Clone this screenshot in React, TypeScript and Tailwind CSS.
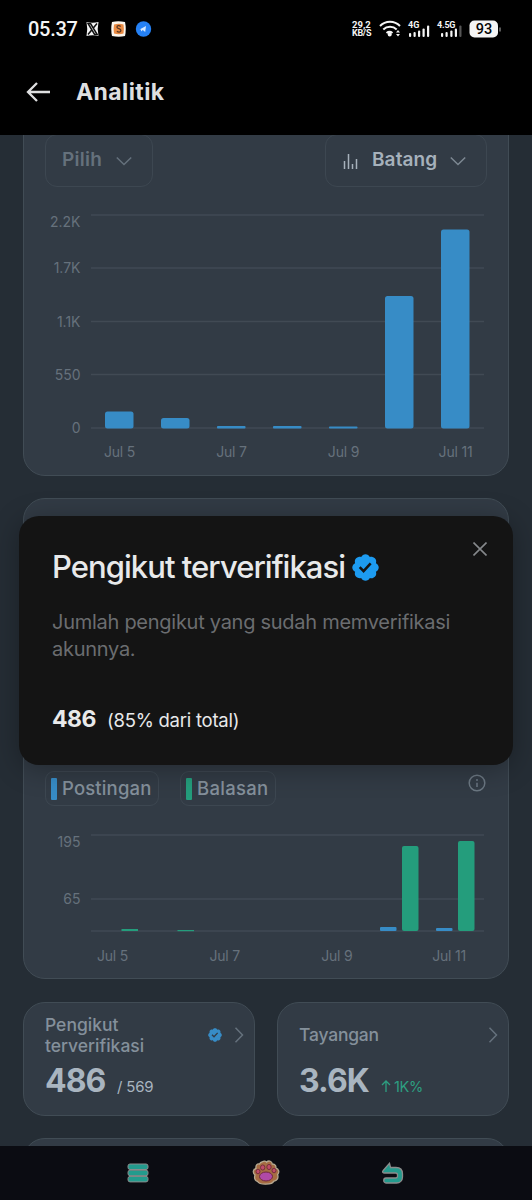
import type { ReactNode } from 'react';
import { clsx } from 'clsx';

const VIEWS = [
  { x: 105, h: 17 },
  { x: 161, h: 10.5 },
  { x: 217, h: 2.5 },
  { x: 273, h: 2.5 },
  { x: 329, h: 2 },
  { x: 385, h: 132.5 },
  { x: 441, h: 199 },
];

const VIEW_TICKS = [
  { label: '2.2K', y: 215 },
  { label: '1.7K', y: 268 },
  { label: '1.1K', y: 321.5 },
  { label: '550', y: 374.5 },
  { label: '0', y: 428 },
];

const POST_TICKS = [
  { label: '195', y: 835 },
  { label: '65', y: 899 },
];

function VerifiedBadge({ className }: { className?: string }) {
  return (
    <svg viewBox="0 0 22 22" className={className} fill="currentColor">
      <path d="M20.396 11c-.018-.646-.215-1.275-.57-1.816-.354-.54-.852-.972-1.438-1.246.223-.607.27-1.264.14-1.897-.131-.634-.437-1.218-.882-1.687-.47-.445-1.053-.75-1.687-.882-.633-.13-1.29-.083-1.897.14-.273-.587-.704-1.086-1.245-1.44S11.647 1.62 11 1.604c-.646.017-1.273.213-1.813.568s-.969.854-1.24 1.44c-.608-.223-1.267-.272-1.902-.14-.635.13-1.22.436-1.69.882-.445.47-.749 1.055-.878 1.688-.13.633-.08 1.29.144 1.896-.587.274-1.087.705-1.443 1.245-.356.54-.555 1.17-.574 1.817.02.647.218 1.276.574 1.817.356.54.856.972 1.443 1.245-.224.606-.274 1.263-.144 1.896.13.634.433 1.218.877 1.688.47.443 1.054.747 1.687.878.633.132 1.29.084 1.897-.136.274.586.705 1.084 1.246 1.439.54.354 1.17.551 1.816.569.647-.016 1.276-.213 1.817-.567s.972-.854 1.245-1.44c.604.239 1.266.296 1.903.164.636-.132 1.22-.447 1.68-.907.46-.46.776-1.044.908-1.681s.075-1.299-.165-1.903c.586-.274 1.084-.705 1.439-1.246.354-.54.551-1.17.569-1.816zM9.662 14.85l-3.429-3.428 1.293-1.302 2.072 2.072 4.4-4.794 1.347 1.246z" />
    </svg>
  );
}

function Chevron({ className, d }: { className?: string; d: string }) {
  return (
    <svg viewBox="0 0 16 16" className={className} fill="none" stroke="currentColor" strokeWidth="1.5">
      <path d={d} />
    </svg>
  );
}

function StatusBar() {
  return (
    <div className="flex h-[57px] items-center justify-between pl-7 pr-[31px] font-[Roboto,sans-serif] text-[#f5f5f5]">
      <div className="flex items-center">
        <span className="w-[57px] text-[20px] font-medium leading-6 tracking-[-0.3px]">05.37</span>
        <svg width="68" height="16" viewBox="0 0 68 16" className="mt-px">
          <path d="M1.5 1q6 1.6 12 0-1.6 7 0 14-6-1.6-12 0Q3 8 1.5 1z" fill="#f4f4f4" />
          <path d="M3 2.5h2.5l6.7 11H9.6zM12 2.5 8.3 7M6.7 9 3 13.5" fill="none" stroke="#111" strokeWidth="1.5" />
          <path d="M27 1q6-1.3 13 0 1.500 7 0 14-6 1.300-13 0-1.500-7 0-14z" fill="#faf5ed" />
          <path d="M29 3.500q5-1.500 9.500 0 .8 4.500 0 9-4.500 1.500-9.500 0-.8-4.500 0-9z" fill="#ea8b43" />
          <path d="M35.700 5.500c-1.500-1.400-4-1-3.700.8.300 1.700 3.900 1.200 3.900 3.200 0 1.900-2.700 2-4 .6" fill="none" stroke="#5a3824" strokeWidth="1.300" />
          <circle cx="58.500" cy="8" r="7.700" fill="#2581f5" />
          <path d="m54.500 8.500 6.500-3.500-.8 6-2.400-2-1.800 1.500v-2z" fill="#d5e8ff" />
        </svg>
      </div>
      <div className="flex items-center">
        <div className="w-[27px] text-[9.500px] font-bold leading-[9px]">
          <div>29,2</div>
          <div className="text-[9px] tracking-[-0.3px]">KB/S</div>
        </div>
        <svg width="122" height="20" viewBox="0 0 122 20" fill="none">
          <g stroke="#f5f5f5" strokeWidth="2">
            <path d="M1 7a14 14 0 0 1 20 0M4.300 10.500a9.500 9.500 0 0 1 13.400 0M7.500 14a5 5 0 0 1 6 0" />
          </g>
          <circle cx="10.700" cy="15.500" r="2" fill="#f5f5f5" />
          <path d="M17 13.500l2-2.500 2 2.500zM17 15l2 2.500 2-2.500z" fill="#f5f5f5" />
          <g fill="#f5f5f5">
            <text x="29" y="8.500" fontSize="9" fontWeight="700">4G</text>
            <rect x="30" y="14" width="2.200" height="4" rx="1" />
            <rect x="34.500" y="13" width="2.200" height="5" rx="1" />
            <rect x="39" y="11.500" width="2.200" height="6.500" rx="1" />
            <rect x="43.500" y="9.500" width="2.200" height="8.500" rx="1" />
            <rect x="48" y="6.500" width="2.200" height="11.500" rx="1" />
            <text x="58" y="8.500" fontSize="9" fontWeight="700" textLength="18.500">4.5G</text>
            <rect x="62" y="14" width="2.200" height="4" rx="1" />
            <rect x="66.500" y="13" width="2.200" height="5" rx="1" />
            <rect x="71.300" y="11.500" width="2.200" height="6.500" rx="1" />
            <rect x="75.800" y="9.500" width="2.200" height="8.500" rx="1" />
            <rect x="80.300" y="6.500" width="2.200" height="11.500" rx="1" fill="#555" />
            <rect x="90.500" y="1.500" width="28.500" height="17" rx="5" />
          </g>
          <path d="M121 8.500v4" stroke="#777" strokeWidth="1.500" />
          <text x="105" y="15.200" fontSize="14.500" fontWeight="500" textAnchor="middle" fill="#050505">93</text>
        </svg>
      </div>
    </div>
  );
}

function Header() {
  return (
    <header className="flex h-[78px] items-center gap-[25px] pb-2 pl-[26px] text-[#dedfe0]">
      <svg width="25" height="20" viewBox="0 0 25 20" fill="none" stroke="currentColor" strokeWidth="2.300">
        <path d="M24 10H2M11 1 2 10l9 9" />
      </svg>
      <h1 className="text-[23px] font-bold leading-7 tracking-[0.4px]">Analitik</h1>
    </header>
  );
}

function Card({ className, children }: { className?: string; children?: ReactNode }) {
  return (
    <section className={clsx('shrink-0 rounded-[22px] border border-[#414c55] bg-[#323b45]', className)}>
      {children}
    </section>
  );
}

function GridLine({ y }: { y: number }) {
  return <line x1="91" x2="484" y1={y} y2={y} stroke="#414a54" strokeWidth="1.300" />;
}

function ViewsChart() {
  return (
    <svg width="484" height="286" viewBox="24 187 484 286" fontSize="14" fill="#66717c">
      {VIEW_TICKS.map((t, i) => (
        <g key={t.label}>
          <GridLine y={t.y} />
          <text x="80.500" y={i === 0 ? 227 : t.y + 5} textAnchor="end">
            {t.label}
          </text>
        </g>
      ))}
      {VIEWS.map((v) => (
        <rect key={v.x} x={v.x} y={428.5 - v.h} width="28.500" height={v.h} rx={v.h < 4 ? 0.8 : 2.5} fill="#378cc6" />
      ))}
      {['Jul 5', 'Jul 7', 'Jul 9', 'Jul 11'].map((label, i) => (
        <text key={label} x={119.5 + i * 112} y="457" textAnchor="middle" letterSpacing="-0.200">
          {label}
        </text>
      ))}
    </svg>
  );
}

function PostsChart() {
  return (
    <svg width="484" height="172" viewBox="24 806 484 172" fontSize="14" fill="#66717c">
      {POST_TICKS.map((t, i) => (
        <g key={t.label}>
          <GridLine y={t.y} />
          <text x="80.500" y={i === 0 ? 847 : 904} textAnchor="end">
            {t.label}
          </text>
        </g>
      ))}
      <GridLine y={931} />
      <g fill="#249d7c">
        <rect x="121.500" y="929" width="16.500" height="2" />
        <rect x="177.500" y="930" width="16.500" height="1.200" />
        <rect x="402" y="846" width="16.500" height="85" rx="2" />
        <rect x="458" y="841" width="16.500" height="90" rx="2" />
      </g>
      <g fill="#378cc6">
        <rect x="380" y="927" width="16.500" height="4" rx="1" />
        <rect x="436" y="928" width="16.500" height="3" rx="1" />
      </g>
      {['Jul 5', 'Jul 7', 'Jul 9', 'Jul 11'].map((label, i) => (
        <text key={label} x={112.5 + i * 112.2} y="960.500" textAnchor="middle" letterSpacing="-0.200">
          {label}
        </text>
      ))}
    </svg>
  );
}

function Modal() {
  return (
    <div className="absolute left-[19px] top-[516px] h-[249px] w-[494px] rounded-[20px] bg-[#141414] px-[33px] pt-[33px] shadow-[0_4px_28px_rgba(0,0,0,0.3)]">
      <svg width="14" height="14" viewBox="0 0 14 14" className="absolute right-[26px] top-[26px]" stroke="#85888b" strokeWidth="1.600">
        <path d="m.5.5 13 13M13.500.5l-13 13" />
      </svg>
      <h2 className="flex h-9 items-center text-[#e8e9ea]">
        <span className="w-[298px] whitespace-nowrap text-[31px] font-medium tracking-[-0.95px]">Pengikut terverifikasi</span>
        <VerifiedBadge className="size-[31px] text-[#1d9bf0]" />
      </h2>
      <p className="mt-6 whitespace-nowrap text-[20px] leading-[27px] tracking-[-0.27px] text-[#6b6d70]">
        Jumlah pengikut yang sudah memverifikasi
        <br />
        akunnya.
      </p>
      <div className="mt-10 flex items-baseline gap-[11px] text-[#e8e9ea]">
        <span className="text-[23px] font-bold leading-8 tracking-[-0.5px]">486</span>
        <span className="text-[18.500px] tracking-[-0.25px]">(85% dari total)</span>
      </div>
    </div>
  );
}

function NavBar() {
  return (
    <nav className="flex h-[54px] shrink-0 items-center justify-between bg-[#0b0c12] pl-[127px] pr-[128px]">
      <svg width="22" height="20" viewBox="0 0 22 20" fill="#239b8d" stroke="#8b8c8c">
        <rect x="1" y="1" width="20" height="5.500" rx="2" />
        <rect x="1" y="7.200" width="20" height="5.500" rx="2" />
        <rect x="1" y="13.400" width="20" height="5.500" rx="2" />
      </svg>
      <svg width="28" height="26" viewBox="0 0 28 26">
        <path d="M10 2c2-1.500 4-1 4.500.2C17-.2 20 1.500 20.300 4c3 0 4 2 3.500 4.200 3 .8 4 4 1.800 6.300 1.200 4-.6 6-4 6.800-1 3.500-14 4-16 .2-3-.7-3.500-4-2.600-6.500C.3 12.500 1 9 4 8.500 3.500 5.500 5 3.500 7.500 4 8 3 9 2.200 10 2z" fill="#a66d43" stroke="#b7aa92" strokeWidth="1.300" />
        <g fill="#bf4c68" stroke="#6f283a" strokeWidth=".9">
          <ellipse cx="6" cy="11.500" rx="2" ry="2.300" />
          <ellipse cx="10.700" cy="7.500" rx="2.200" ry="2.600" />
          <ellipse cx="17" cy="7" rx="2.200" ry="2.600" />
          <ellipse cx="22" cy="10.500" rx="2" ry="2.300" />
        </g>
        <ellipse cx="14" cy="16.500" rx="6.500" ry="4.500" fill="#b04aa6" stroke="#6f283a" />
      </svg>
      <svg width="22" height="23" viewBox="0 0 22 23">
        <path d="M1 8.800 7.500 1.300l1 4.200h5.500c4 0 6.500 2.500 6.500 6.500v3c0 3.500-2.500 6-6 6H4c-3 0-3-5 0-5h9.500c1.500 0 2-.7 2-1.800v-1.200c0-1.300-.8-2-2-2H2.500C1 11 0 10 1 8.800z" fill="#239b8d" stroke="#8b8c8c" strokeWidth="1.300" />
      </svg>
    </nav>
  );
}

export default function App() {
  return (
    <div className="relative flex h-[1200px] w-[532px] flex-col overflow-hidden bg-black font-[Inter,sans-serif]">
      <StatusBar />
      <Header />
      <main className="flex min-h-0 flex-1 flex-col overflow-hidden bg-[#252d35] px-[23px]">
        <Card className="-mt-[23px] h-[364px] pt-[21px]">
          <div className="flex h-[53px] justify-between px-[21px]">
            <div className="flex w-[108px] items-center justify-between rounded-[12px] border border-[#3d4751] pl-4 pr-5 text-[19px] font-semibold tracking-[0.3px] text-[#65717c]">
              Pilih
              <Chevron className="size-4" d="m.8 4.500 7.200 7 7.200-7" />
            </div>
            <div className="flex w-[162px] items-center rounded-[12px] border border-[#3d4751] pl-[17px] text-[19px] font-semibold text-[#a6b1bb]">
              <svg width="15" height="16" viewBox="0 0 15 16" stroke="currentColor" strokeWidth="1.500">
                <path d="M1.500 8v8M5.500 1v15M9.500 11v5M13.500 6v10" />
              </svg>
              <span className="ml-[14px] w-[78px] tracking-[0.1px]">Batang</span>
              <Chevron className="size-4 text-[#7d8892]" d="m.8 4.500 7.200 7 7.200-7" />
            </div>
          </div>
          <ViewsChart />
        </Card>

        <Card className="mt-[22px] flex h-[481px] flex-col justify-end">
          <div className="flex h-[35px] items-center px-[21px] text-[18.500px] font-medium tracking-[0.15px] text-[#84909b]">
            <div className="flex h-[35px] w-[114px] items-center gap-[5px] rounded-[9px] border border-[#3d4751] pl-[5px]">
              <i className="h-[22px] w-1.5 rounded-[1px] bg-[#378cc6]" />
              Postingan
            </div>
            <div className="ml-[21px] flex h-[35px] w-[96px] items-center gap-[5px] rounded-[9px] border border-[#3d4751] pl-[5px] tracking-[0.3px]">
              <i className="h-[22px] w-1.5 rounded-[1px] bg-[#249d7c]" />
              Balasan
            </div>
            <svg width="18" height="18" viewBox="0 0 18 18" className="mb-3 ml-auto mr-px" fill="none" stroke="#6b7782" strokeWidth="1.500">
              <circle cx="9" cy="9" r="7.800" />
              <path d="M9 8.800v4.200M9 5v2" />
            </svg>
          </div>
          <PostsChart />
        </Card>

        <div className="mt-[23px] grid shrink-0 grid-cols-2 gap-x-[22px] gap-y-[22px]">
          <Card className="h-[114px] pl-[21px] pt-[10px]">
            <div className="flex h-[43px] items-center text-[17.500px] font-medium leading-[21px] text-[#84909b]">
              <span className="w-[162px] shrink-0">
                Pengikut
                <br />
                terverifikasi
              </span>
              <VerifiedBadge className="size-4 shrink-0 text-[#378cc6]" />
              <Chevron className="ml-2 size-4 shrink-0 text-[#65717c]" d="m4.500.8 7 7.200-7 7.200" />
            </div>
            <div className="mt-[5px] flex items-baseline text-[#a9b5c0]">
              <span className="w-[72px] text-[32px] font-bold leading-[40px] tracking-[-1px]">486</span>
              <span className="text-[15px] tracking-[-0.2px]">/ 569</span>
            </div>
          </Card>
          <Card className="h-[114px] pl-[21px] pt-[10px]">
            <div className="flex h-[43px] items-center text-[17.500px] font-medium text-[#84909b]">
              <span className="w-[186px] shrink-0 pt-px tracking-[-0.2px]">Tayangan</span>
              <Chevron className="size-4 shrink-0 text-[#65717c]" d="m4.500.8 7 7.200-7 7.200" />
            </div>
            <div className="mt-[5px] flex items-baseline text-[#a9b5c0]">
              <span className="w-[82px] text-[32px] font-bold leading-[40px] tracking-[-0.9px]">3.6K</span>
              <svg width="10" height="12" viewBox="0 0 10 12" className="mr-[3px]" fill="none" stroke="#2d9f81" strokeWidth="1.300">
                <path d="M5 12V1M1 5l4-4 4 4" />
              </svg>
              <span className="text-[14.500px] tracking-[-0.3px] text-[#2d9f81]">1K%</span>
            </div>
          </Card>
          <Card className="h-[114px]" />
          <Card className="h-[114px]" />
        </div>
      </main>
      <NavBar />
      <Modal />
    </div>
  );
}
